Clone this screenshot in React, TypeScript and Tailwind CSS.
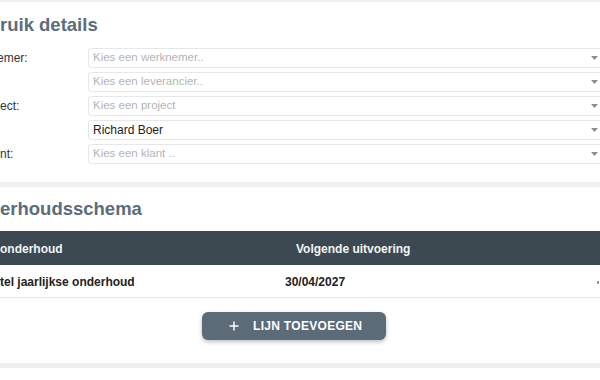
const fields = [
  { label: 'emer:', shift: true, value: 'Kies een werknemer..', placeholder: true },
  { label: '', shift: false, value: 'Kies een leverancier..', placeholder: true },
  { label: 'ect:', shift: false, value: 'Kies een project', placeholder: true },
  { label: '', shift: false, value: 'Richard Boer', placeholder: false },
  { label: 'nt:', shift: false, value: 'Kies een klant ..', placeholder: true },
]

function Caret() {
  return (
    <svg width="7" height="4" viewBox="0 0 7 4" className="shrink-0">
      <path d="M0 0h7L3.5 4z" fill="#8c8c8c" />
    </svg>
  )
}

export default function App() {
  return (
    <div className="w-[600px] h-[380px] overflow-hidden bg-white font-['Liberation_Sans',Arial,sans-serif]">
      <div className="bg-[#eef0f2] pt-[2px] pb-[5px] flex flex-col gap-[5px]">
        {/* gebruik details */}
        <section className="bg-white h-[180px] pt-[11px]">
          <h2 className="text-[18.5px] leading-[24px] font-bold text-[#5b6d7a]">ruik details</h2>
          <div className="mt-[11px] flex flex-col gap-[4px]">
            {fields.map((f, i) => (
              <div key={i} className="flex items-center h-[20px]">
                <div className="w-[88px] shrink-0 overflow-hidden">
                  <span className={`block text-[12px] text-[#333] ${f.shift ? '-ml-[3px]' : ''}`}>{f.label}</span>
                </div>
                <div className="flex-1 -mr-[4px] h-[20px] flex items-center justify-between pl-[4px] pr-[5px] border border-[#e6e7e9] rounded-[3px]">
                  <span className={f.placeholder ? 'text-[11.5px] text-[#b4b4b4]' : 'text-[12px] text-[#222]'}>{f.value}</span>
                  <Caret />
                </div>
              </div>
            ))}
          </div>
        </section>

        {/* onderhoudsschema */}
        <section className="bg-white h-[176px] pt-[10px]">
          <h2 className="text-[18.5px] leading-[24px] font-bold text-[#5b6d7a]">erhoudsschema</h2>
          <div className="mt-[10px]">
            <div className="flex items-center h-[34px] pt-[1px] bg-[#3d4951] text-[12px] font-bold text-[#f2f4f5]">
              <div className="w-[296px]">onderhoud</div>
              <div className="flex-1">Volgende uitvoering</div>
            </div>
            <div className="flex items-center h-[33px] pt-[2px] border-b border-[#e4e6e8] text-[12px] font-bold text-[#222]">
              <div className="w-[285px]">tel jaarlijkse onderhoud</div>
              <div className="w-[312px]">30/04/2027</div>
              <div className="w-[2px] h-[3px] bg-[#999]" />
            </div>
          </div>
          <div className="pl-[202px] mt-[14px]">
            <button className="w-[184px] h-[28px] rounded-[6px] bg-[#5b6b78] shadow-[0_2px_4px_rgba(0,0,0,0.25)] flex items-center pl-[27px] gap-[14px] text-white">
              <svg width="10" height="10" viewBox="0 0 10 10">
                <path d="M5 0.5v9M0.5 5h9" stroke="#fff" strokeWidth="1.5" />
              </svg>
              <span className="text-[12px] font-bold tracking-[0.3px]">LIJN TOEVOEGEN</span>
            </button>
          </div>
        </section>
      </div>
    </div>
  )
}
